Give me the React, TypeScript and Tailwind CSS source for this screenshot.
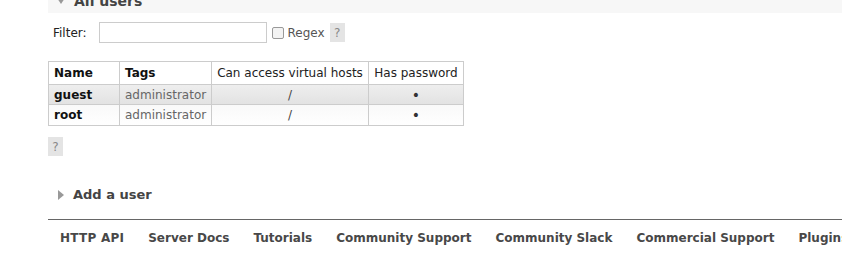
import React from "react";

const users = [
  { name: "guest", tags: "administrator", vhosts: "/", pw: true },
  { name: "root", tags: "administrator", vhosts: "/", pw: true },
];

const links = [
  "HTTP API",
  "Server Docs",
  "Tutorials",
  "Community Support",
  "Community Slack",
  "Commercial Support",
  "Plugins",
  "GitHub",
];

const HelpBox = () => (
  <span className="inline-flex items-center justify-center w-[15px] h-[19px] bg-[#e4e4e4] text-[#888] text-[12px]">?</span>
);

export default function App() {
  return (
    <div className="w-[842px] h-[261px] overflow-hidden bg-white pl-[48px] text-[12px] text-[#333] font-['DejaVu_Sans','Verdana',sans-serif]">
      {/* Section header, scrolled so only its lower part shows */}
      <div className="h-[13px] bg-[#f7f7f7] overflow-hidden relative w-[900px]">
        <div className="flex items-center gap-[9px] pl-[9px] -mt-[9px] h-[20px]">
          <span className="w-0 h-0 border-l-[4px] border-r-[4px] border-t-[6px] border-l-transparent border-r-transparent border-t-[#999]" />
          <span className="font-bold text-[14px] text-[#444]">All users</span>
        </div>
      </div>

      {/* Filter */}
      <div className="flex items-center mt-[9px] pl-[5px] h-[21px]">
        <span className="text-[#222]">Filter:</span>
        <input className="ml-[12px] w-[168px] h-[21px] border border-[#ccc] bg-white outline-none" />
        <span className="ml-[5px] w-[12px] h-[12px] rounded-[2px] border border-[#999] bg-[#f3f3f3]" />
        <span className="ml-[4px] text-[#555]">Regex</span>
        <span className="ml-[5px]"><HelpBox /></span>
      </div>

      {/* Users table */}
      <table className="mt-[18px] border-collapse border border-[#ccc]">
        <thead>
          <tr className="h-[23px] bg-white">
            <th className="border border-[#ccc] text-left font-bold text-[#111] pl-[5px] w-[71px]">Name</th>
            <th className="border border-[#ccc] text-left font-bold text-[#111] pl-[5px] w-[92px]">Tags</th>
            <th className="border border-[#ccc] font-normal text-[#222] px-[5px] w-[157px]">Can access virtual hosts</th>
            <th className="border border-[#ccc] font-normal text-[#222] px-[5px] w-[95px]">Has password</th>
          </tr>
        </thead>
        <tbody>
          {users.map((u, i) => (
            <tr
              key={u.name}
              className={
                i === 0
                  ? "h-[20px] bg-gradient-to-b from-[#eeeeee] to-[#e2e2e2]"
                  : "h-[21px] bg-gradient-to-b from-[#f9f9f9] to-[#ffffff]"
              }
            >
              <td className="border border-[#ccc] pl-[5px] font-bold text-[#111]">{u.name}</td>
              <td className="border border-[#ccc] pl-[5px] text-[#666]">{u.tags}</td>
              <td className="border border-[#ccc] text-center text-[#444]">{u.vhosts}</td>
              <td className="border border-[#ccc] text-center text-[#333] text-[14px] leading-none">{u.pw ? "•" : ""}</td>
            </tr>
          ))}
        </tbody>
      </table>

      <div className="mt-[11px]">
        <HelpBox />
      </div>

      {/* Add a user */}
      <div className="flex items-center gap-[9px] pl-[10px] mt-[29px]">
        <span className="w-0 h-0 border-t-[5px] border-b-[5px] border-l-[6px] border-t-transparent border-b-transparent border-l-[#999]" />
        <span className="font-bold text-[13px] text-[#444]">Add a user</span>
      </div>

      {/* Footer */}
      <div className="mt-[14px] border-t border-[#666] w-[900px]">
        <div className="flex gap-[24px] pl-[12px] pt-[9px] font-bold text-[12px] text-[#484848] whitespace-nowrap">
          {links.map((l, i) => (
            <span key={l} className={i === 0 ? "tracking-[0.25px]" : ""}>{l}</span>
          ))}
        </div>
      </div>
    </div>
  );
}
